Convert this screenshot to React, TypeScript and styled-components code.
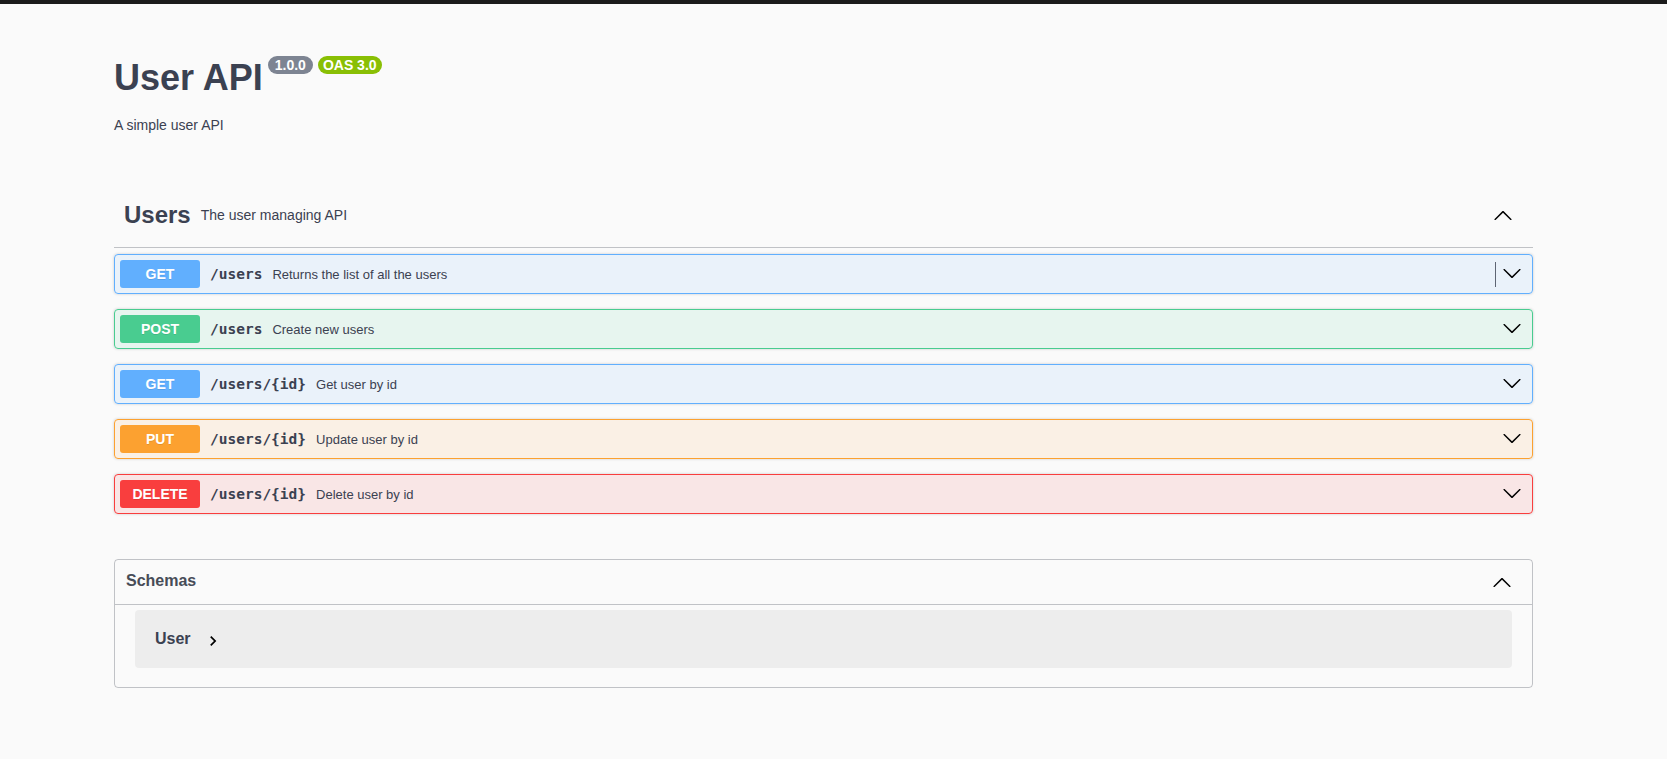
import React from "react";
import styled, { createGlobalStyle } from "styled-components";

const GlobalStyle = createGlobalStyle`
  html, body {
    margin: 0;
    padding: 0;
    background: #fafafa;
  }
  body {
    font-family: "Liberation Sans", Arial, sans-serif;
    color: #3b4151;
  }
  * { box-sizing: border-box; }
`;

type Method = "get" | "post" | "put" | "delete";

const methodColors: Record<Method, { main: string; bg: string }> = {
  get: { main: "#61affe", bg: "rgba(97, 175, 254, 0.1)" },
  post: { main: "#49cc90", bg: "rgba(73, 204, 144, 0.1)" },
  put: { main: "#fca130", bg: "rgba(252, 161, 48, 0.1)" },
  delete: { main: "#f93e3e", bg: "rgba(249, 62, 62, 0.1)" },
};

const Page = styled.div`
  min-height: 759px;
  background: #fafafa;
`;

const TopBar = styled.div`
  height: 4px;
  background: #1b1b1b;
`;

const Wrapper = styled.main`
  width: 1419px;
  margin-left: 114px;
  padding-bottom: 40px;
`;

const Info = styled.section`
  padding-top: 52px;
`;

const TitleRow = styled.div`
  display: flex;
  align-items: flex-start;
`;

const Title = styled.h2`
  margin: 4px 0 0;
  font-size: 36px;
  line-height: 36px;
  font-weight: 700;
  color: #3b4151;
`;

const Badge = styled.span<{ $bg: string; $padX: number }>`
  display: inline-block;
  margin-left: 5px;
  padding: 2px ${(p) => p.$padX}px;
  border-radius: 57px;
  background: ${(p) => p.$bg};
  color: #fff;
  font-size: 14px;
  line-height: 14px;
  font-weight: 700;
`;

const Description = styled.p`
  margin: 19px 0 0;
  font-size: 14px;
  line-height: 20px;
`;

const TagSection = styled.section`
  margin-top: 47px;
`;

const TagHeader = styled.div`
  display: flex;
  align-items: center;
  min-height: 66px;
  padding: 10px 20px 10px 10px;
  border-bottom: 1px solid rgba(59, 65, 81, 0.3);
`;

const TagName = styled.h3`
  margin: 0;
  font-size: 24px;
  line-height: 45px;
  font-weight: 700;
  color: #3b4151;
`;

const TagNote = styled.small`
  flex: 1;
  padding: 0 10px;
  font-size: 14px;
  color: #3b4151;
`;

const OpList = styled.div`
  display: flex;
  flex-direction: column;
  gap: 15px;
  margin-top: 6px;
`;

const OpBlock = styled.div<{ $method: Method }>`
  display: flex;
  align-items: center;
  height: 40px;
  padding: 0 5px;
  border: 1px solid ${(p) => methodColors[p.$method].main};
  border-radius: 4px;
  background: ${(p) => methodColors[p.$method].bg};
  box-shadow: 0 0 3px rgba(0, 0, 0, 0.19);
`;

const MethodTag = styled.span<{ $method: Method }>`
  flex: none;
  width: 80px;
  height: 28px;
  line-height: 28px;
  text-align: center;
  border-radius: 3px;
  background: ${(p) => methodColors[p.$method].main};
  color: #fff;
  font-size: 14px;
  font-weight: 700;
  text-shadow: 0 1px 0 rgba(0, 0, 0, 0.1);
`;

const OpPath = styled.span`
  padding: 0 10px;
  font-family: "DejaVu Sans Mono", "Liberation Mono", monospace;
  font-size: 14.5px;
  font-weight: 700;
  color: #3b4151;
`;

const OpSummary = styled.span`
  flex: 1;
  font-size: 13px;
  color: #3b4151;
`;

const Divider = styled.span`
  width: 1px;
  height: 25px;
  background: #3b4151;
  opacity: 0.8;
  margin-right: 6px;
`;

const ArrowButton = styled.span`
  display: flex;
  align-items: center;
  margin-right: 5px;
  margin-top: -3px;
`;

const Models = styled.section`
  margin-top: 45px;
  border: 1px solid rgba(59, 65, 81, 0.3);
  border-radius: 4px;
  padding-bottom: 19px;
`;

const ModelsHeader = styled.div`
  display: flex;
  align-items: center;
  justify-content: space-between;
  height: 45px;
  padding: 0 20px 0 11px;
  border-bottom: 1px solid rgba(59, 65, 81, 0.3);
`;

const ModelsTitle = styled.h4`
  margin: 0 0 2px;
  font-size: 16px;
  font-weight: 700;
  color: #474c57;
`;

const ModelBox = styled.div`
  display: flex;
  align-items: center;
  height: 58px;
  margin: 5px 20px 0 20px;
  padding: 0 20px;
  border-radius: 4px;
  background: rgba(0, 0, 0, 0.05);
`;

const ModelTitle = styled.span`
  font-size: 16px;
  font-weight: 700;
  color: #3b4151;
`;

const ModelToggle = styled.span`
  display: flex;
  margin-left: 12px;
  margin-top: 3px;
`;

const ChevronDown = () => (
  <svg width="20" height="20" viewBox="0 0 20 20" fill="#000">
    <path d="M17.418 6.109c.272-.268.709-.268.979 0s.271.701 0 .969l-7.908 7.83c-.27.268-.707.268-.979 0l-7.908-7.83c-.27-.268-.27-.701 0-.969.271-.268.709-.268.979 0L10 13.25l7.418-7.141z" />
  </svg>
);

const ChevronUp = () => (
  <svg width="20" height="20" viewBox="0 0 20 20" fill="#000">
    <path d="M17.418 14.908c.272.268.709.268.979 0s.271-.701 0-.969l-7.908-7.83c-.27-.268-.707-.268-.979 0l-7.908 7.83c-.27.268-.27.701 0 .969.271.268.709.268.979 0L10 7.767l7.418 7.141z" />
  </svg>
);

const ChevronRight = () => (
  <svg width="20" height="20" viewBox="0 0 24 24" fill="#000">
    <path d="M10 6 8.59 7.41 13.17 12l-4.58 4.59L10 18l6-6z" />
  </svg>
);

type Operation = {
  method: Method;
  path: string;
  summary: string;
  focused?: boolean;
};

const operations: Operation[] = [
  { method: "get", path: "/users", summary: "Returns the list of all the users", focused: true },
  { method: "post", path: "/users", summary: "Create new users" },
  { method: "get", path: "/users/{id}", summary: "Get user by id" },
  { method: "put", path: "/users/{id}", summary: "Update user by id" },
  { method: "delete", path: "/users/{id}", summary: "Delete user by id" },
];

export default function App() {
  return (
    <Page>
      <GlobalStyle />
      <TopBar />
      <Wrapper>
        <Info>
          <TitleRow>
            <Title>User API</Title>
            <Badge $bg="#7d8492" $padX={7}>1.0.0</Badge>
            <Badge $bg="#89bf04" $padX={5}>OAS 3.0</Badge>
          </TitleRow>
          <Description>A simple user API</Description>
        </Info>

        <TagSection>
          <TagHeader>
            <TagName>Users</TagName>
            <TagNote>The user managing API</TagNote>
            <ChevronUp />
          </TagHeader>
          <OpList>
            {operations.map((op, i) => (
              <OpBlock key={i} $method={op.method}>
                <MethodTag $method={op.method}>{op.method.toUpperCase()}</MethodTag>
                <OpPath>{op.path}</OpPath>
                <OpSummary>{op.summary}</OpSummary>
                {op.focused && <Divider />}
                <ArrowButton>
                  <ChevronDown />
                </ArrowButton>
              </OpBlock>
            ))}
          </OpList>
        </TagSection>

        <Models>
          <ModelsHeader>
            <ModelsTitle>Schemas</ModelsTitle>
            <ChevronUp />
          </ModelsHeader>
          <ModelBox>
            <ModelTitle>User</ModelTitle>
            <ModelToggle>
              <ChevronRight />
            </ModelToggle>
          </ModelBox>
        </Models>
      </Wrapper>
    </Page>
  );
}
